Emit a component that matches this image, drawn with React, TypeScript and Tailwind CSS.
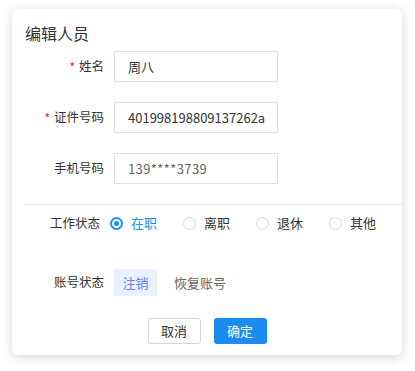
import React, { useState } from "react";

const font = { fontFamily: '"Noto Sans CJK SC", "Noto Sans", sans-serif' };

const Field = ({ label, required, value, muted }: { label: string; required?: boolean; value: string; muted?: boolean }) => (
    <div className="flex items-center h-[31px]">
        <div className="w-[79px] flex justify-end items-center text-[12.5px] text-[#333]">
            {required && <span className="text-[#f5222d] text-[12px] mr-[4px]">*</span>}
            {label}
        </div>
        <div className="ml-[10px] w-[164px] h-[31px] border border-[#e0e0e0] flex items-center pl-[13px] pr-[2px] overflow-hidden">
            <span className={"whitespace-nowrap text-[13px] " + (muted ? "text-[#666] tracking-[0.4px]" : "text-[#333]")}>{value}</span>
        </div>
    </div>
);

const App = () => {
    const [status, setStatus] = useState("在职");
    const options = ["在职", "离职", "退休", "其他"];

    return (
        <div className="w-[415px] h-[371px] bg-white pt-[9px] pl-[12px]" style={font}>
            <div className="w-[390px] h-[346px] rounded-[6px] bg-white shadow-[0_2px_12px_rgba(0,0,0,0.16)] flex flex-col">
                <h1 className="pl-[13px] pt-[13px] text-[16px] leading-[22px] text-[#333]">编辑人员</h1>

                <div className="pl-[13px] mt-[7px] flex flex-col gap-[20px]">
                    <Field label="姓名" required value="周八" />
                    <Field label="证件号码" required value="401998198809137262a" />
                    <Field label="手机号码" value="139****3739" muted />
                </div>

                <div className="ml-[13px] mt-[20px] border-t border-[#e8e8e8]" />

                <div className="pl-[13px] mt-[8px] h-[20px] flex items-center">
                    <div className="w-[79px] text-right text-[12.5px] text-[#333]">工作状态</div>
                    <div className="ml-[10px] flex items-center">
                        {options.map((o) => {
                            const on = o === status;
                            return (
                                <button key={o} onClick={() => setStatus(o)} className="flex items-center w-[73px]">
                                    {on ? (
                                        <span className="w-[13px] h-[13px] rounded-full border-[2px] border-[#1890ff] bg-white flex items-center justify-center">
                                            <span className="w-[5px] h-[5px] rounded-full bg-[#1890ff]" />
                                        </span>
                                    ) : (
                                        <span className="w-[13px] h-[13px] rounded-full border border-[#d9d9d9] bg-white" />
                                    )}
                                    <span className={"ml-[8px] text-[13px] " + (on ? "text-[#1890ff]" : "text-[#333]")}>{o}</span>
                                </button>
                            );
                        })}
                    </div>
                </div>

                <div className="pl-[13px] mt-[36px] h-[27px] flex items-center">
                    <div className="w-[79px] text-right text-[12.5px] text-[#333]">账号状态</div>
                    <button className="ml-[10px] h-[27px] w-[43px] bg-[#eaf0ff] text-[#6b7cf5] text-[13px]">注销</button>
                    <button className="ml-[17px] text-[13px] text-[#666]">恢复账号</button>
                </div>

                <div className="mt-[22px] flex justify-center gap-[13px]">
                    <button className="w-[53px] h-[26px] border border-[#d4d4d4] rounded-[3px] text-[13px] text-[#333] bg-white">取消</button>
                    <button className="w-[53px] h-[26px] rounded-[3px] text-[13px] text-white bg-[#1a8cf0]">确定</button>
                </div>
            </div>
        </div>
    );
};

export default App;
